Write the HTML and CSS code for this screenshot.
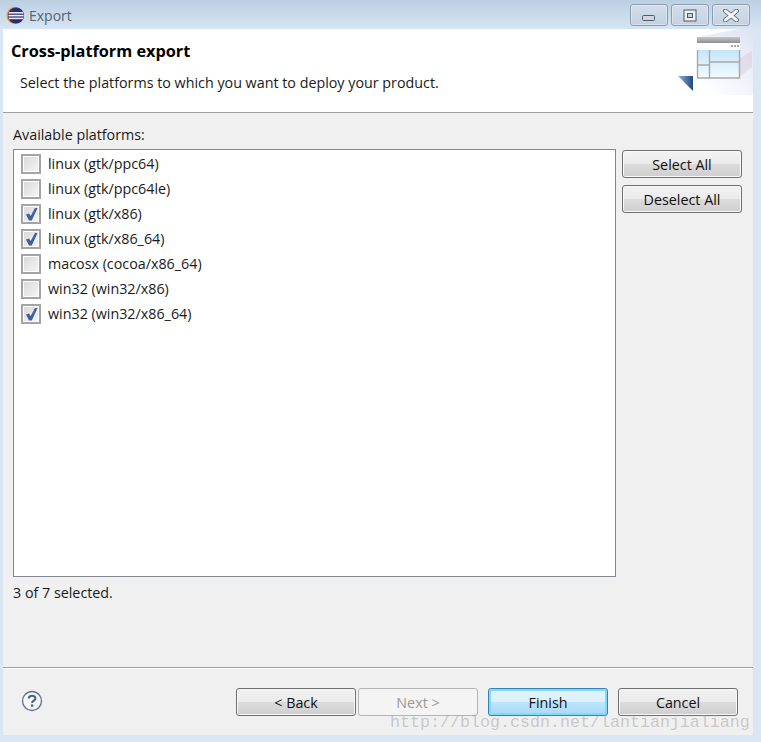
FILE: index.html
```html
<!DOCTYPE html>
<html lang="en">
<head>
<meta charset="utf-8">
<title>Export</title>
<link rel="stylesheet" href="styles.css">
</head>
<body>
<div class="window">
  <div class="titlebar">
    <svg class="app-icon" width="19" height="19" viewBox="0 0 19 19">
      <circle cx="9" cy="9.5" r="8.5" fill="#e8942a"/>
      <circle cx="10" cy="9.5" r="8" fill="#2c2c6e"/>
      <rect x="3" y="6" width="14" height="1.6" fill="#e8e8f4"/>
      <rect x="2.5" y="8.8" width="15" height="1.6" fill="#f4f4fa"/>
      <rect x="3" y="11.6" width="14" height="1.6" fill="#e8e8f4"/>
    </svg>
    <span class="title">Export</span>
    <div class="controls">
      <div class="ctrl"><svg width="14" height="8" viewBox="0 0 14 8"><rect x="0.5" y="1.5" width="12" height="5" rx="1" fill="#d3d8de" stroke="#4c5a6c"/></svg></div>
      <div class="ctrl"><svg width="14" height="13" viewBox="0 0 14 13"><rect x="1" y="1" width="12" height="11" fill="#eef1f4" stroke="#4c5a6c"/><rect x="4.5" y="4.5" width="5" height="4" fill="#c6d4e2" stroke="#4c5a6c"/></svg></div>
      <div class="ctrl"><svg width="16" height="13" viewBox="0 0 16 13"><path d="M2.5 2 L13.5 11 M13.5 2 L2.5 11" stroke="#4c5a6c" stroke-width="4.6" stroke-linecap="round"/><path d="M2.5 2 L13.5 11 M13.5 2 L2.5 11" stroke="#f4f6f8" stroke-width="3" stroke-linecap="round"/></svg></div>
    </div>
  </div>
  <div class="dialog">
    <header class="banner">
      <div class="banner-text">
        <h1 class="heading">Cross-platform export</h1>
        <p class="desc">Select the platforms to which you want to deploy your product.</p>
      </div>
      <svg class="banner-art" width="75" height="66" viewBox="0 0 75 66">
        <defs>
          <linearGradient id="bg" x1="0" y1="1" x2="1" y2="0"><stop offset="0.2" stop-color="#ffffff"/><stop offset="1" stop-color="#dfe3f4"/></linearGradient>
          <linearGradient id="pane" x1="0" y1="0" x2="0" y2="1"><stop offset="0" stop-color="#c4e6f8"/><stop offset="1" stop-color="#f2fbff"/></linearGradient>
          <linearGradient id="bar" x1="0" y1="0" x2="0" y2="1"><stop offset="0" stop-color="#c8c8c8"/><stop offset="1" stop-color="#8f8f8f"/></linearGradient>
          <linearGradient id="tri" x1="0" y1="0" x2="1" y2="0"><stop offset="0" stop-color="#8fb0d8"/><stop offset="1" stop-color="#1f4a80"/></linearGradient>
        </defs>
        <path d="M0 66 L10 50 L19 50 L19 8 L60 0 L75 0 L75 66 Z" fill="url(#bg)"/>
        <path d="M60 49 L74 38 L74 22 L60 30 Z" fill="#d8cfdc" opacity="0.55"/>
        <rect x="19" y="8" width="43" height="6" fill="url(#bar)"/>
        <rect x="19" y="14" width="43" height="7" fill="#ffffff"/>
        <rect x="53" y="16" width="2" height="2" fill="#a8a8a8"/><rect x="56" y="16" width="2" height="2" fill="#a8a8a8"/><rect x="59" y="16" width="2" height="2" fill="#a8a8a8"/>
        <rect x="19" y="21" width="43" height="28" fill="url(#pane)"/>
        <path d="M19.5 21 V49 H61.5 V21 M31.5 21 V49 M19.5 36 H31.5 M31.5 33 H61.5" fill="none" stroke="#a9a9a9" stroke-width="1.4"/>
        <path d="M0 47 L15 47 L15 62 Z" fill="url(#tri)"/>
      </svg>
    </header>
    <main class="body">
      <label class="list-label">Available platforms:</label>
      <div class="columns">
        <ul class="list">
          <li class="item"><span class="check"></span>linux (gtk/ppc64)</li>
          <li class="item"><span class="check"></span>linux (gtk/ppc64le)</li>
          <li class="item"><span class="check"><svg class="tick" width="13" height="14" viewBox="0 0 13 14"><path d="M1 7.5 L4 6.5 L5.7 9 L10 1 L12.5 1 L6.8 13.5 L4 13.5 Z" fill="#42609f"/></svg></span>linux (gtk/x86)</li>
          <li class="item"><span class="check"><svg class="tick" width="13" height="14" viewBox="0 0 13 14"><path d="M1 7.5 L4 6.5 L5.7 9 L10 1 L12.5 1 L6.8 13.5 L4 13.5 Z" fill="#42609f"/></svg></span>linux (gtk/x86_64)</li>
          <li class="item"><span class="check"></span>macosx (cocoa/x86_64)</li>
          <li class="item"><span class="check"></span>win32 (win32/x86)</li>
          <li class="item"><span class="check"><svg class="tick" width="13" height="14" viewBox="0 0 13 14"><path d="M1 7.5 L4 6.5 L5.7 9 L10 1 L12.5 1 L6.8 13.5 L4 13.5 Z" fill="#42609f"/></svg></span>win32 (win32/x86_64)</li>
        </ul>
        <div class="side">
          <button class="btn">Select All</button>
          <button class="btn">Deselect All</button>
        </div>
      </div>
      <p class="status">3 of 7 selected.</p>
    </main>
    <footer class="footer">
      <svg class="help" width="22" height="22" viewBox="0 0 22 22">
        <circle cx="11" cy="11" r="9.5" fill="#f4f6f9" stroke="#5c7396" stroke-width="1.3"/>
        <path d="M7.8 8.4 C7.8 4.9 14.4 4.9 14.4 8.4 C14.4 10.6 11.1 10.6 11.1 13" fill="none" stroke="#4a6288" stroke-width="2.1"/>
        <rect x="10" y="14.4" width="2.3" height="2.3" fill="#4a6288"/>
      </svg>
      <div class="actions">
        <button class="btn">&lt; Back</button>
        <button class="btn btn-disabled" disabled>Next &gt;</button>
        <button class="btn btn-default">Finish</button>
        <button class="btn">Cancel</button>
      </div>
    </footer>
  </div>
  <div class="watermark">http://blog.csdn.net/lantianjialiang</div>
</div>
</body>
</html>
```

FILE: styles.css
```css
* { box-sizing: border-box; }
html, body { margin: 0; padding: 0; }
body { width: 761px; height: 742px; overflow: hidden; font-family: "Open Sans", "Noto Sans", sans-serif; font-size: 14.3px; color: #1a1a1a; }
.window { position: relative; width: 761px; height: 742px; display: flex; flex-direction: column; background: #d9e6f3; }
.titlebar { height: 29px; flex: none; display: flex; align-items: center; padding: 0 11px 0 6px; background: linear-gradient(#bccfe1, #d6e5f4); }
.app-icon { flex: none; margin-top: 2px; }
.title { margin-left: 4px; margin-top: 1px; font-size: 14px; color: #56636f; }
.controls { margin-left: auto; display: flex; gap: 3px; margin-top: 1px; }
.ctrl { width: 38px; height: 22px; display: flex; align-items: center; justify-content: center; border: 1px solid #8b9db3; border-radius: 3px; background: linear-gradient(#d3deea, #c3d2e2); box-shadow: inset 0 0 0 1px rgba(255,255,255,.35); }
.ctrl:first-child svg { margin-top: 6px; }
.dialog { flex: none; width: 750px; height: 706px; margin-left: 3px; display: flex; flex-direction: column; background: #f0f0f0; }
.banner { flex: none; height: 84px; display: flex; justify-content: space-between; background: #fff; border-bottom: 1px solid #a0a0a0; }
.banner-text { padding: 11px 0 0 8px; }
.heading { margin: 0; font-size: 16.3px; line-height: 22px; font-weight: 700; color: #000; }
.desc { margin: 11px 0 0 9px; line-height: 20px; color: #1a1a1a; }
.banner-art { flex: none; margin-bottom: 17px; }
.body { flex: 1; display: flex; flex-direction: column; padding: 12px 11px 0 10px; }
.list-label { height: 24px; line-height: 20px; }
.columns { display: flex; gap: 6px; }
.list { list-style: none; margin: 0; padding: 1px 0 0; width: 603px; height: 428px; background: #fff; border: 1px solid #828790; }
.item { height: 25px; display: flex; align-items: center; padding-left: 7px; gap: 7px; line-height: 20px; }
.check { width: 20px; height: 20px; flex: none; display: flex; align-items: center; justify-content: center; border: 2px solid #a4a4a4; background: linear-gradient(135deg, #d8d8d8, #f6f6f6); box-shadow: inset 0 0 0 1px #fff; }
.tick { display: block; }
.side { display: flex; flex-direction: column; gap: 7px; padding-top: 1px; }
.btn { width: 120px; height: 28px; padding: 0; font: inherit; color: #111; border: 1px solid #707070; border-radius: 3px; background: linear-gradient(#f2f2f2 0, #ebebeb 50%, #dcdcdc 50%, #cfcfcf 100%); box-shadow: inset 0 0 0 1px #f8f8f8; }
.status { margin: 6px 0 0; line-height: 20px; }
.footer { flex: none; height: 68px; display: flex; align-items: flex-start; border-top: 1px solid #a0a0a0; box-shadow: inset 0 1px 0 #fff; padding: 20px 15px 0 18px; }
.help { margin-top: 2px; }
.actions { margin-left: auto; display: flex; }
.actions .btn { margin-left: 10px; }
.actions .btn-disabled { margin-left: 2px; color: #9a9a9a; border-color: #b5b5b5; background: #f4f4f4; box-shadow: none; }
.btn-default { border-color: #3c7fb1; background: linear-gradient(#e6f5fd 0, #d9f0fc 50%, #bee6fd 50%, #a7d9f5 100%); box-shadow: inset 0 0 0 2px #7ddcfb; }
.watermark { position: absolute; left: 390px; top: 713px; font-family: "Liberation Mono", monospace; font-size: 16.67px; line-height: 20px; color: rgba(150,150,150,.45); white-space: nowrap; }
```
